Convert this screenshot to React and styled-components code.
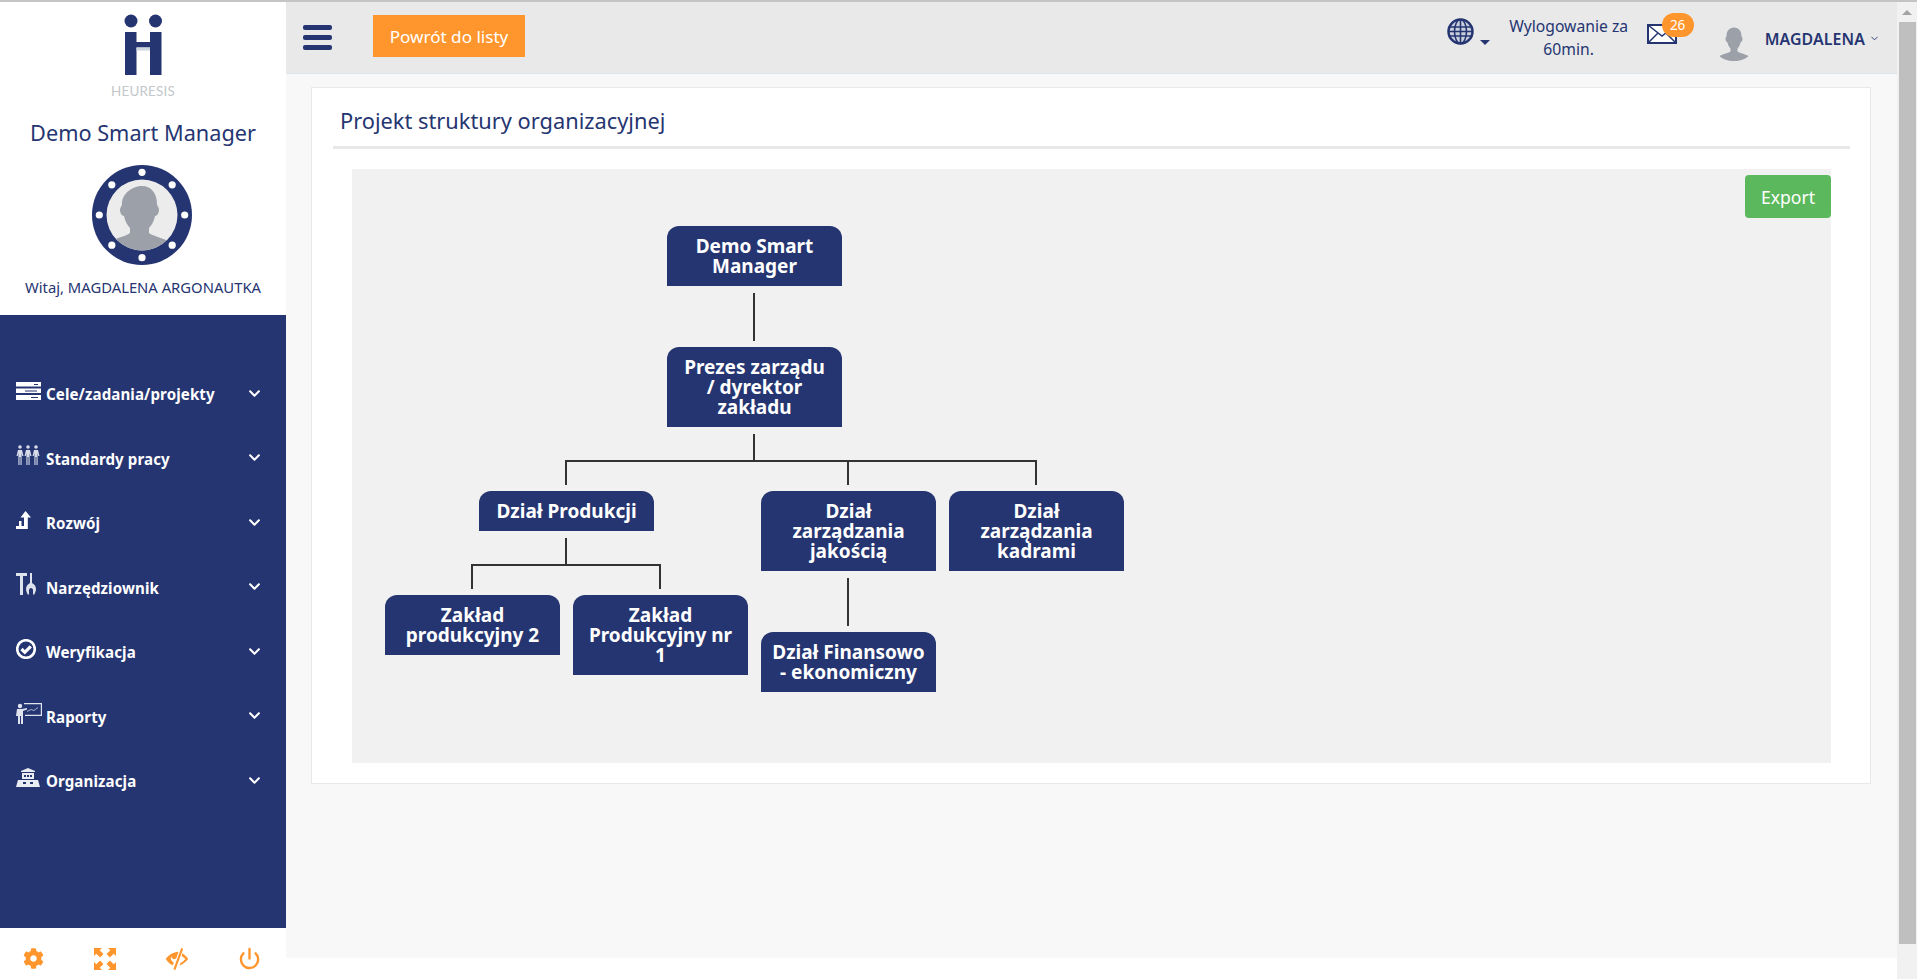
import React from "react";
import styled, { createGlobalStyle } from "styled-components";
import { FaCog, FaChevronDown } from "react-icons/fa";
import { Power, ChevronDown } from "lucide-react";

const NAVY = "#253571";
const ORANGE = "#ff962d";
const FONT = `"Noto Sans", "Open Sans", sans-serif`;

const Global = createGlobalStyle`
  html, body { margin: 0; padding: 0; height: 100%; overflow: hidden; background: #fff; }
  body { font-family: ${FONT}; color: ${NAVY}; }
  * { box-sizing: border-box; }
`;

const Page = styled.div`
  display: flex;
  height: 979px;
  width: 1917px;
  border-top: 2px solid #c4c4c4;
`;

/* sidebar */
const Sidebar = styled.aside`
  width: 286px;
  display: flex;
  flex-direction: column;
  flex: none;
`;
const Brand = styled.div`
  height: 313px;
  background: #fff;
  display: flex;
  flex-direction: column;
  align-items: center;
  padding-top: 12px;
`;
const LogoText = styled.div`
  font-family: "Lato", sans-serif;
  font-size: 13.4px;
  line-height: 14px;
  color: #c3c8cc;
  letter-spacing: 0.2px;
  margin-top: 8px;
`;
const CompanyName = styled.h1`
  margin: 22px 0 0;
  font-size: 21.7px;
  line-height: 26px;
  font-weight: 400;
  color: ${NAVY};
`;
const WelcomeText = styled.div`
  margin-top: 12px;
  font-size: 14.8px;
  line-height: 20px;
`;
const AvatarBox = styled.div`
  margin: 19px 2px 0 0;
  height: 100px;
`;
const Menu = styled.nav`
  flex: 1;
  background: ${NAVY};
  padding-top: 47px;
`;
const MenuRow = styled.div`
  height: 64.5px;
  display: flex;
  align-items: center;
  padding: 0 25px 0 16px;
  color: #fff;
`;
const MenuIcon = styled.span`
  width: 30px;
  display: flex;
  flex: none;
  margin-bottom: 7px;
`;
const MenuLabel = styled.span`
  font-size: 15.1px;
  font-weight: 700;
  letter-spacing: 0.1px;
  flex: 1;
`;
const MenuChevron = styled(FaChevronDown)`
  width: 13px;
  height: 13px;
  margin-bottom: 2px;
`;
const SideFooter = styled.div`
  height: 51px;
  background: #fff;
  display: grid;
  grid-template-columns: repeat(4, 72px);
  padding-top: 10px;
  margin-left: -3px;
  align-items: center;
  justify-items: center;
  color: ${ORANGE};
`;

/* main column */
const Main = styled.div`
  flex: 1;
  display: flex;
  flex-direction: column;
  min-width: 0;
`;
const Topbar = styled.header`
  height: 72px;
  flex: none;
  background: #e9e9e9;
  border-bottom: 1px solid #d9e4ee;
  display: flex;
  align-items: flex-start;
  padding: 13px 17px 0;
`;
const Hamburger = styled.div`
  width: 29px;
  margin-top: 10px;
  display: flex;
  flex-direction: column;
  gap: 5px;
  & > span {
    height: 5px;
    border-radius: 2px;
    background: ${NAVY};
  }
`;
const BackButton = styled.button`
  margin-left: 41px;
  width: 152px;
  height: 42px;
  border: 0;
  background: ${ORANGE};
  color: #fff;
  font-family: ${FONT};
  font-size: 17.1px;
  padding: 0;
`;
const TopRight = styled.div`
  margin-left: auto;
  display: flex;
  align-items: flex-start;
`;
const GlobeBox = styled.div`
  display: flex;
  align-items: flex-end;
  gap: 6px;
  padding-top: 3px;
`;
const Caret = styled.span`
  width: 0;
  height: 0;
  border-style: solid;
  border-width: 5px 5px 0;
  border-color: ${NAVY} transparent transparent;
`;
const LogoutText = styled.div`
  width: 130px;
  margin-left: 14px;
  text-align: center;
  font-size: 15.7px;
  line-height: 23px;
`;
const MailBox = styled.div`
  position: relative;
  margin-left: 13px;
  margin-top: 9px;
  width: 30px;
  height: 20px;
`;
const Badge = styled.span`
  position: absolute;
  left: 15px;
  top: -11px;
  width: 32px;
  height: 24px;
  border-radius: 12px;
  background: ${ORANGE};
  color: #fff;
  font-size: 13.5px;
  line-height: 24px;
  text-align: center;
`;
const UserBox = styled.div`
  margin-left: 39px;
  margin-top: 10px;
  display: flex;
  align-items: center;
`;
const UserName = styled.span`
  margin-left: 13px;
  font-size: 15.9px;
  font-weight: 600;
  letter-spacing: 0.1px;
  margin-top: -9px;
`;
const UserChevron = styled(ChevronDown)`
  width: 11px;
  height: 11px;
  margin: -9px 0 0 4px;
`;

const Content = styled.main`
  height: 884px;
  flex: none;
  padding: 13px 26px 0 25px;
  background-color: #f8f8f8;
  background-image: radial-gradient(#f1f1f1 0.7px, transparent 0.8px);
  background-size: 11px 11px;
`;
const Panel = styled.section`
  height: 697px;
  background: #fff;
  border: 1px solid #e8e8e8;
  padding: 0 20px 0 21px;
`;
const PanelHeader = styled.div`
  height: 61px;
  border-bottom: 3px solid #e6e8ea;
  padding: 17px 0 0 7px;
`;
const PanelTitle = styled.h2`
  margin: 0;
  font-size: 21.8px;
  line-height: 32px;
  font-weight: 400;
  color: ${NAVY};
`;
const ChartArea = styled.div`
  position: relative;
  height: 594px;
  margin: 20px 0 0 19px;
  background: #f1f1f1;
  padding: 57px 0 0 33px;
  width: 1479px;
`;
const ExportButton = styled.button`
  position: absolute;
  top: 6px;
  right: 0;
  width: 86px;
  height: 43px;
  border: 0;
  border-radius: 4px;
  background: #5cb85c;
  color: #fff;
  font-family: ${FONT};
  font-size: 17.6px;
  padding: 0;
`;

/* org chart */
const Branch = styled.div`
  display: inline-flex;
  flex-direction: column;
  align-items: center;
`;
const NodeBox = styled.div`
  width: 175px;
  padding: 10px 0;
  background: ${NAVY};
  border-radius: 12px 12px 0 0;
  color: #fff;
  font-size: 19px;
  font-weight: 700;
  line-height: 20px;
  text-align: center;
  white-space: nowrap;
`;
const NodeLine = styled.span`
  display: block;
`;
const Children = styled.div`
  display: flex;
  gap: 13px;
  padding-top: ${(p) => (p.$single ? "61px" : "64px")};
  position: relative;
  &::before {
    content: "";
    position: absolute;
    left: calc(50% - 1.5px);
    top: 7px;
    width: 2px;
    height: ${(p) => (p.$single ? "48px" : "26px")};
    background: #333;
  }
`;
const ChildCell = styled.div`
  position: relative;
  &::before {
    content: "";
    position: absolute;
    left: calc(50% - 1.5px);
    top: -31px;
    width: 2px;
    height: 25px;
    background: #333;
    display: ${(p) => (p.$single ? "none" : "block")};
  }
  &::after {
    content: "";
    position: absolute;
    top: -31px;
    height: 2px;
    background: #333;
    display: ${(p) => (p.$single ? "none" : "block")};
    left: ${(p) => (p.$first ? "calc(50% - 1.5px)" : "-13px")};
    right: ${(p) => (p.$last ? "calc(50% - 0.5px)" : "0")};
  }
`;

/* scrollbar */
const ScrollTrack = styled.div`
  width: 20px;
  flex: none;
  background: #f1f1f1;
  display: flex;
  flex-direction: column;
  align-items: center;
  padding-top: 8px;
`;
const ScrollArrow = styled.span`
  width: 0;
  height: 0;
  border-style: solid;
  border-width: 0 5px 5px;
  border-color: transparent transparent #a3a3a3;
`;
const ScrollThumb = styled.div`
  width: 17px;
  height: 922px;
  margin-top: 7px;
  margin-left: 1px;
  background: #bfbfbf;
`;

const chart = {
  lines: ["Demo Smart", "Manager"],
  children: [
    {
      lines: ["Prezes zarządu", "/ dyrektor", "zakładu"],
      children: [
        {
          lines: ["Dział Produkcji"],
          children: [
            { lines: ["Zakład", "produkcyjny 2"] },
            { lines: ["Zakład", "Produkcyjny nr", "1"] },
          ],
        },
        {
          lines: ["Dział", "zarządzania", "jakością"],
          children: [{ lines: ["Dział Finansowo", "- ekonomiczny"] }],
        },
        { lines: ["Dział", "zarządzania", "kadrami"] },
      ],
    },
  ],
};

function OrgNode({ node }) {
  const kids = node.children || [];
  const single = kids.length === 1;
  return (
    <Branch>
      <NodeBox>
        {node.lines.map((l) => (
          <NodeLine key={l}>{l}</NodeLine>
        ))}
      </NodeBox>
      {kids.length > 0 && (
        <Children $single={single}>
          {kids.map((k, i) => (
            <ChildCell
              key={k.lines.join()}
              $single={single}
              $first={i === 0}
              $last={i === kids.length - 1}
            >
              <OrgNode node={k} />
            </ChildCell>
          ))}
        </Children>
      )}
    </Branch>
  );
}

function LogoMark() {
  return (
    <svg width="38" height="62" viewBox="0 0 38 62">
      <circle cx="7" cy="7" r="6.500" fill={NAVY} />
      <circle cx="31.500" cy="7" r="6.500" fill={NAVY} />
      <path fill={NAVY} d="M1 18h11.500v10h13.500V18H37.500v43H26V33.500H12.500V61H1z" />
      <rect x="12.500" y="33.500" width="13.500" height="3" fill="#cdd6de" />
    </svg>
  );
}

function Silhouette({ size }) {
  return (
    <svg width={size} height={size} viewBox="0 0 72 72">
      <path
        fill="#9ca0a8"
        d="M36 5c9 0 15 7 15 17 0 2 2 2 2 6 0 4-2 6-4 7-1 6-4 10-6 12v6c3 3 15 5 22 9-7 7-16 10-29 10s-22-3-29-10c7-4 19-6 22-9v-6c-2-2-5-6-6-12-2-1-4-3-4-7 0-4 2-4 2-6C21 12 27 5 36 5z"
      />
    </svg>
  );
}

function RingAvatar() {
  const dots = [0, 45, 90, 135, 180, 225, 270, 315];
  return (
    <svg width="100" height="100" viewBox="0 0 100 100">
      <circle cx="50" cy="50" r="50" fill={NAVY} />
      {dots.map((a) => (
        <circle
          key={a}
          cx={50 + 42.7 * Math.cos((a * Math.PI) / 180)}
          cy={50 + 42.7 * Math.sin((a * Math.PI) / 180)}
          r="3.600"
          fill="#fff"
        />
      ))}
      <circle cx="50" cy="50" r="35.500" fill="#ececec" />
      <clipPath id="ringClip">
        <circle cx="50" cy="50" r="35.500" />
      </clipPath>
      <g clipPath="url(#ringClip)">
        <path
          fill="#9ca0a8"
          d="M50 21c9 0 15 7 15 18 0 2 2 3 2 6 0 3-2 6-4 6-1 5-3 9-6 12v5c5 4 17 5 26 12v10H12V80c9-7 21-8 26-12v-5c-3-3-5-7-6-12-2 0-4-3-4-6 0-3 2-4 2-6 0-11 11-18 20-18z"
        />
      </g>
    </svg>
  );
}

function GlobeIcon() {
  return (
    <svg width="27" height="27" viewBox="0 0 27 27" fill="none" stroke={NAVY}>
      <circle cx="13.500" cy="13.500" r="12" fill="#c9cfdc" strokeWidth="2.500" />
      <ellipse cx="13.500" cy="13.500" rx="6" ry="12" strokeWidth="1.600" />
      <path d="M13.500 1v25M2 9h23M1.500 13.500h24M2 18h23" strokeWidth="1.600" />
    </svg>
  );
}

function MailIcon() {
  return (
    <svg width="30" height="20" viewBox="0 0 30 20" fill="#fff" stroke={NAVY}>
      <rect x="1" y="1" width="28" height="18" strokeWidth="2" />
      <path d="M1 1l14 11L29 1M1 19l10-10M29 19L19 9" fill="none" strokeWidth="1.500" />
    </svg>
  );
}

function FullscreenIcon() {
  return (
    <svg width="22" height="22" viewBox="0 0 22 22" fill={ORANGE}>
      <path d="M0 0h8L5.700 2.300 9.500 6.100 6.100 9.500 2.300 5.700 0 8z" />
      <path d="M22 0v8l-2.300-2.300-3.800 3.800-3.400-3.400 3.800-3.800L14 0z" />
      <path d="M0 22v-8l2.300 2.300 3.800-3.800 3.400 3.400-3.800 3.800L8 22z" />
      <path d="M22 22h-8l2.300-2.300-3.800-3.800 3.400-3.400 3.800 3.800L22 14z" />
    </svg>
  );
}

function EyeSlashIcon() {
  return (
    <svg width="24" height="22" viewBox="0 0 24 22" fill={ORANGE}>
      <path d="M13.500 3.800C8 4.200 3.500 7 .8 11c1.800 2.900 4 5 7 6.300l1-2.800c-1.800-.8-3-2.500-3-4.200 0-.6.100-1.200.4-1.700.3 1.500 1.500 2.600 3 2.600 1 0 1.700-.5 2.200-1.200z" />
      <path d="M16.200 0l2 .8L10.400 22l-2-.8z" />
      <path d="M17.500 5.200l-1 2.800c1.500 1 3 2 3.800 3-1 1.500-2.700 3-5 4l-.6 2.400c3.500-1.200 6.200-3.600 8.500-6.400-1.500-2.300-3.700-4.400-5.700-5.800z" />
    </svg>
  );
}

const menuIcons = {
  tasks: (
    <svg width="25" height="18" viewBox="0 0 25 18" fill="#fff">
      <path d="M0 0h25v4.500H0zM0 6.500h25V11H0zM0 13h25v5H0z" />
      <path d="M9 8.500h12v1H9zM15 15h7v1h-7zM18 2h4v1h-4z" fill={NAVY} />
    </svg>
  ),
  people: (
    <svg width="24" height="20" viewBox="0 0 24 20" fill="#d8dde9">
      <circle cx="4" cy="2" r="1.800" />
      <circle cx="12" cy="2" r="1.800" />
      <circle cx="20" cy="2" r="1.800" />
      <path d="M2 5h4l1.500 6H6.200L5.600 8v12H4.500v-8h-1v8H2.400V8l-.6 3H.5zM10 5h4l1.500 6h-1.300L13.600 8v12h-1.100v-8h-1v8h-1.100V8l-.6 3H8.500zM18 5h4l1.500 6h-1.300L21.600 8v12h-1.100v-8h-1v8h-1.100V8l-.6 3h-1.300z" />
    </svg>
  ),
  growth: (
    <svg width="16" height="18" viewBox="0 0 16 18" fill="#fff">
      <path d="M9.500 0l5.500 6.500h-3.200V18H0v-3h3v-5h2.500v5H8V6.500H4.500z" />
    </svg>
  ),
  tools: (
    <svg width="20" height="22" viewBox="0 0 20 22" fill="#dfe3ee">
      <path d="M0 0h11v3H7v19H4V3H0z" />
      <path d="M14 0h2v10c2 1 4 3 4 6 0 2-1 4-2 6l-1-1v-4c0-1-1-2-2-2s-2 1-2 2v4l-1 1c-1-2-2-4-2-6 0-3 2-5 4-6z" />
    </svg>
  ),
  check: (
    <svg width="20" height="20" viewBox="0 0 20 20" fill="none" stroke="#fff">
      <circle cx="10" cy="10" r="8.800" strokeWidth="2.600" />
      <path d="M5.500 10l3.300 3.300 6-6" strokeWidth="3.200" />
    </svg>
  ),
  board: (
    <svg width="26" height="21" viewBox="0 0 26 21" fill="#dfe3ee">
      <circle cx="4" cy="3" r="2.200" />
      <path d="M1 6h5l5-1v1.500L7 8v13H5v-8H4v8H2v-8H0z" />
      <path d="M8 0h18v13H9v-1.200h15.800V1.200H8z" />
      <path d="M11 8l4-2 3 1 4-3v1l-4 3-3-1-4 2z" opacity="0.7" />
    </svg>
  ),
  building: (
    <svg width="24" height="19" viewBox="0 0 24 19" fill="#e9ecf3">
      <path d="M12 0l7 3v1H5V3zM6 5h12v6H6z" />
      <path d="M2 12h20l2 7H0z" />
      <path d="M8 7h2v2H8zM11 7h2v2h-2zM14 7h2v2h-2zM7 14h3v2H7zM14 14h3v2h-3z" fill={NAVY} />
    </svg>
  ),
};

const menuItems = [
  ["tasks", "Cele/zadania/projekty"],
  ["people", "Standardy pracy"],
  ["growth", "Rozwój"],
  ["tools", "Narzędziownik"],
  ["check", "Weryfikacja"],
  ["board", "Raporty"],
  ["building", "Organizacja"],
];

export default function App() {
  return (
    <Page>
      <Global />
      <Sidebar>
        <Brand>
          <LogoMark />
          <LogoText>HEURESIS</LogoText>
          <CompanyName>Demo Smart Manager</CompanyName>
          <AvatarBox>
            <RingAvatar />
          </AvatarBox>
          <WelcomeText>Witaj, MAGDALENA ARGONAUTKA</WelcomeText>
        </Brand>
        <Menu>
          {menuItems.map(([icon, label]) => (
            <MenuRow key={label}>
              <MenuIcon>{menuIcons[icon]}</MenuIcon>
              <MenuLabel>{label}</MenuLabel>
              <MenuChevron />
            </MenuRow>
          ))}
        </Menu>
        <SideFooter>
          <FaCog size={21} />
          <FullscreenIcon />
          <EyeSlashIcon />
          <Power size={23} strokeWidth={2.5} />
        </SideFooter>
      </Sidebar>
      <Main>
        <Topbar>
          <Hamburger>
            <span />
            <span />
            <span />
          </Hamburger>
          <BackButton>Powrót do listy</BackButton>
          <TopRight>
            <GlobeBox>
              <GlobeIcon />
              <Caret />
            </GlobeBox>
            <LogoutText>
              Wylogowanie za
              <br />
              60min.
            </LogoutText>
            <MailBox>
              <MailIcon />
              <Badge>26</Badge>
            </MailBox>
            <UserBox>
              <Silhouette size={36} />
              <UserName>MAGDALENA</UserName>
              <UserChevron strokeWidth={2} />
            </UserBox>
          </TopRight>
        </Topbar>
        <Content>
          <Panel>
            <PanelHeader>
              <PanelTitle>Projekt struktury organizacyjnej</PanelTitle>
            </PanelHeader>
            <ChartArea>
              <ExportButton>Export</ExportButton>
              <OrgNode node={chart} />
            </ChartArea>
          </Panel>
        </Content>
      </Main>
      <ScrollTrack>
        <ScrollArrow />
        <ScrollThumb />
      </ScrollTrack>
    </Page>
  );
}
